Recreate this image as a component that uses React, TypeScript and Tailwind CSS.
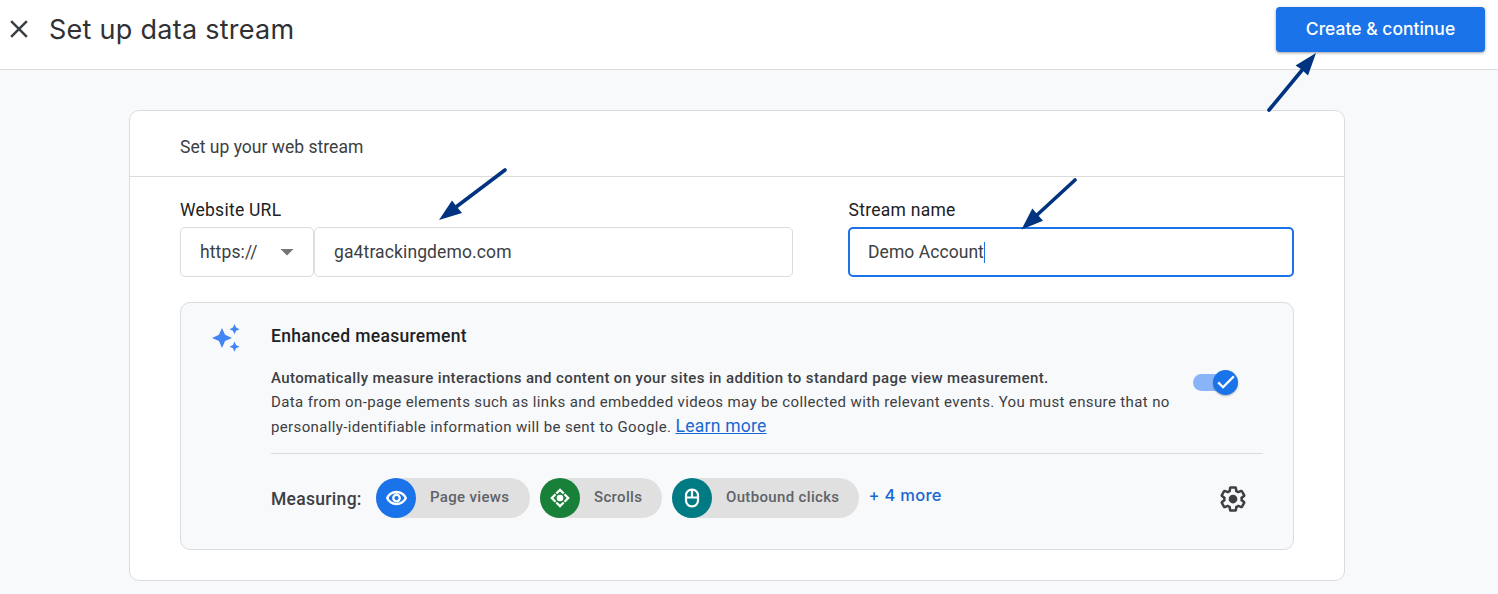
import React from "react";

const GEAR =
  "M13.85 22.25h-3.7c-.74 0-1.36-.54-1.45-1.27l-.27-1.89c-.27-.14-.53-.29-.79-.46l-1.8.72c-.7.26-1.47-.03-1.81-.65L2.2 15.53c-.35-.66-.2-1.44.36-1.88l1.53-1.19c-.01-.15-.02-.3-.02-.46 0-.15.01-.31.02-.46l-1.52-1.19c-.59-.45-.74-1.26-.37-1.88l1.85-3.19c.34-.62 1.11-.9 1.79-.63l1.81.73c.26-.17.52-.32.78-.46l.27-1.91c.09-.7.71-1.25 1.44-1.25h3.7c.74 0 1.36.54 1.45 1.27l.27 1.89c.27.14.53.29.79.46l1.8-.72c.71-.26 1.48.03 1.82.65l1.84 3.18c.36.66.2 1.44-.36 1.88l-1.52 1.19c.01.15.02.3.02.46s-.01.31-.02.46l1.52 1.19c.56.45.72 1.23.37 1.86l-1.86 3.22c-.34.62-1.11.9-1.8.63l-1.8-.72c-.26.17-.52.32-.78.46l-.27 1.91c-.1.68-.72 1.22-1.46 1.22zm-3.23-2h2.76l.37-2.55.53-.22c.44-.18.88-.44 1.34-.78l.45-.34 2.38.96 1.38-2.4-2.03-1.58.07-.56c.03-.26.06-.51.06-.78s-.03-.53-.06-.78l-.07-.56 2.03-1.58-1.39-2.4-2.39.96-.45-.35c-.42-.32-.87-.58-1.33-.77l-.52-.22-.37-2.55h-2.76l-.37 2.55-.53.21c-.44.19-.88.44-1.34.79l-.45.33-2.38-.95-1.39 2.39 2.03 1.58-.07.56a7 7 0 0 0-.06.79c0 .26.02.53.06.78l.07.56-2.03 1.58 1.38 2.4 2.39-.96.45.35c.43.33.86.58 1.33.77l.53.22.38 2.55z";

function EyeIcon() {
  return (
    <svg viewBox="0 0 24 24" className="size-[23px]" fill="#fff">
      <path d="M12 6.400c3.600 0 6.800 2 8.400 5.100-1.600 3.100-4.800 5.100-8.400 5.100s-6.800-2-8.400-5.100C5.200 8.400 8.400 6.400 12 6.400M12 4C7 4 2.730 7.110 1 11.500 2.730 15.890 7 19 12 19s9.270-3.110 11-7.500C21.270 7.110 17 4 12 4zm0 5.300a2.200 2.200 0 1 1 0 4.400 2.200 2.200 0 0 1 0-4.400m0-2.400a4.600 4.600 0 1 0 0 9.200 4.600 4.600 0 0 0 0-9.200z" />
    </svg>
  );
}

function ScrollIcon() {
  return (
    <svg viewBox="0 0 20 20" className="size-5" fill="#fff">
      <circle cx="10" cy="10" r="3.300" />
      <path d="M10 0.200L14.500 4.700L12.900 6.300L10 3.400L7.100 6.300L5.500 4.700ZM10 19.800L5.500 15.300L7.100 13.700L10 16.600L12.900 13.700L14.500 15.300ZM0.200 10L4.700 5.500L6.300 7.100L3.400 10L6.300 12.900L4.700 14.500ZM19.800 10L15.300 14.500L13.700 12.900L16.600 10L13.700 7.100L15.300 5.500Z" />
    </svg>
  );
}

function MouseIcon() {
  return (
    <svg viewBox="0 0 16 20" className="h-5 w-4" fill="none" stroke="#fff" strokeWidth="2.200">
      <rect x="2" y="1.600" width="12" height="16.800" rx="5.800" />
      <path d="M2 9.500h12M8 1.600v7.900" />
    </svg>
  );
}

function Chip({ icon, color, width, label }: { icon: React.ReactNode; color: string; width: string; label: string }) {
  return (
    <div className={`flex h-10 items-center rounded-full bg-[#e0e0e0] ${width}`}>
      <div className={`flex size-10 shrink-0 items-center justify-center rounded-full ${color}`}>{icon}</div>
      <span className="-mt-[3px] ml-[14px] whitespace-nowrap text-[15px] font-medium leading-5 tracking-[0.34px] text-[#5f6368]">{label}</span>
    </div>
  );
}

export default function App() {
  return (
    <div className="relative h-[594px] w-[1498px] overflow-hidden bg-[#f8f9fb] font-['Roboto',sans-serif] text-[#3c4043]">
      <header className="flex h-[70px] items-start justify-between border-b border-[#dadce0] bg-white">
        <div className="flex pl-1 pt-[7px]">
          <svg viewBox="0 0 24 24" className="mt-[7px] size-[30px]" fill="#3c4043">
            <path d="M19 6.410L17.590 5 12 10.590 6.410 5 5 6.410 10.590 12 5 17.590 6.410 19 12 13.410 17.590 19 19 17.590 13.410 12z" />
          </svg>
          <h1 className="ml-[15px] mt-px whitespace-nowrap font-['Inter',sans-serif] text-[27px] leading-[44px] tracking-[0.270px] text-[#303134]">Set up data stream</h1>
        </div>
        <button className="mr-[13px] mt-[7px] h-[45px] w-[209px] whitespace-nowrap rounded-[4px] bg-[#1a73e8] font-['Inter',sans-serif] text-[17.500px] font-medium text-white shadow-[0_1px_3px_rgba(60,64,67,0.5)]">
          Create &amp; continue
        </button>
      </header>

      <main className="ml-[129px] mt-10 h-[471px] w-[1216px] rounded-[10px] border border-[#dadce0] bg-white">
        <div className="flex h-[66px] items-center border-b border-[#dadce0] pl-[50px] pt-[6px]">
          <h2 className="text-[17.500px] leading-6 tracking-[0.020px]">Set up your web stream</h2>
        </div>
        <div className="px-[50px] pt-[21px]">
          <div className="flex">
            <div className="w-[613px]">
              <div className="text-[17.500px] leading-6 tracking-[0.250px] text-[#202124]">Website URL</div>
              <div className="mt-[5px] flex">
                <div className="flex h-[50px] w-[134px] items-center justify-between rounded-[5px] border border-[#dadce0] px-[19px] text-[17.500px]">
                  <span className="tracking-[0.120px]">https://</span>
                  <svg viewBox="0 0 14 7" className="h-[7px] w-[14px]" fill="#757575"><path d="M0.500 0h13L7 6.500z" /></svg>
                </div>
                <div className="flex h-[50px] w-[479px] items-center rounded-[5px] border border-[#dadce0] pl-[19px] text-[17.500px] tracking-[0.120px]">ga4trackingdemo.com</div>
              </div>
            </div>
            <div className="ml-[55px] w-[446px]">
              <div className="pl-[0.5px] text-[17.500px] leading-6 tracking-[0.270px] text-[#202124]">Stream name</div>
              <div className="mt-[5px] flex h-[50px] items-center rounded-[5px] border-2 border-[#1a73e8] pl-[18px] text-[17.500px]">
                <span className="tracking-[0.060px]">Demo Account</span>
                <span className="h-[21px] w-px bg-[#1a73e8]" />
              </div>
            </div>
          </div>

          <section className="mt-[25px] flex h-[248px] rounded-[10px] border border-[#dadce0] bg-[#f8f9fb]">
            <svg viewBox="0 0 28 28" className="ml-[31px] mt-[21px] size-7 shrink-0" fill="#4285f4">
              <path d="M10 4l3.050 6.750L20 14l-6.950 3.100L10 24l-3.050-6.900L0 14l6.950-3.250z" />
              <path d="M22.500 0l1.530 3.500L27.500 5.200l-3.470 1.600L22.500 10.300l-1.530-3.500L17.500 5.200l3.470-1.700zM22.500 17.500l1.530 3.500 3.470 1.700-3.470 1.600-1.530 3.500-1.530-3.500-3.470-1.600 3.470-1.700z" />
            </svg>
            <div className="ml-[31px] w-[992px]">
              <h3 className="mt-[21px] text-[17.500px] font-medium leading-6 tracking-[0.320px] text-[#202124]">Enhanced measurement</h3>
              <div className="flex h-[106px] justify-between border-b border-[#dadce0] pt-[18px]">
                <div className="whitespace-nowrap text-[15px] leading-6 tracking-[0.370px]">
                  <p className="font-medium tracking-[0.380px]">Automatically measure interactions and content on your sites in addition to standard page view measurement.</p>
                  <p>Data from on-page elements such as links and embedded videos may be collected with relevant events. You must ensure that no</p>
                  <p>personally-identifiable information will be sent to Google. <a className="text-[17.500px] tracking-[0.250px] text-[#1967d2] underline">Learn more</a></p>
                </div>
                <div className="mr-[25px] mt-[3.5px] flex h-[25px] w-[45px] items-center">
                  <div className="h-[17px] w-[32px] shrink-0 rounded-l-full bg-[#8ab4f8]" />
                  <div className="-ml-3 flex size-[25px] shrink-0 items-center justify-center rounded-full bg-[#1a73e8] shadow-[0_1px_2px_rgba(0,0,0,0.3)]">
                    <svg viewBox="0 0 18 14" className="h-[14px] w-[18px]" fill="none" stroke="#fff" strokeWidth="2.300"><path d="M1.200 7.400L6 12.200 16.800 1.400" /></svg>
                  </div>
                </div>
              </div>
              <div className="mt-6 flex h-10 items-center">
                <span className="mt-[2px] w-[105px] whitespace-nowrap text-[17.500px] font-medium tracking-[0.300px]">Measuring:</span>
                <div className="flex gap-[10px]">
                  <Chip icon={<EyeIcon />} color="bg-[#1a73e8]" width="w-[154px]" label="Page views" />
                  <Chip icon={<ScrollIcon />} color="bg-[#188038]" width="w-[122px]" label="Scrolls" />
                  <Chip icon={<MouseIcon />} color="bg-[#007b83]" width="w-[187px]" label="Outbound clicks" />
                </div>
                <a className="-mt-[6px] ml-[9.5px] whitespace-nowrap font-['Inter',sans-serif] text-[16.500px] font-medium tracking-[0.270px] text-[#1967d2]">+ 4 more</a>
                <svg viewBox="0 0 24 24" className="ml-auto mr-[15px] mt-[2px] size-[30px]" fill="#3c4043">
                  <path d={GEAR} />
                  <circle cx="12" cy="12" r="3.500" />
                </svg>
              </div>
            </div>
          </section>
        </div>
      </main>

      <svg viewBox="0 0 1498 594" className="pointer-events-none absolute inset-0 h-[594px] w-[1498px]" fill="#003380" stroke="#003380" strokeWidth="3.600" strokeLinecap="round">
        <path d="M1269 110L1303 69M505 170L456 207M1075 180L1037 215" />
        <path stroke="none" d="M1316 53L1295.500 65.500L1301 69L1308 75.500ZM439 220L452 200.500L457 207L462 213ZM1021.500 229.500L1032.300 208.500L1037 214L1043 220.800Z" />
      </svg>
    </div>
  );
}
